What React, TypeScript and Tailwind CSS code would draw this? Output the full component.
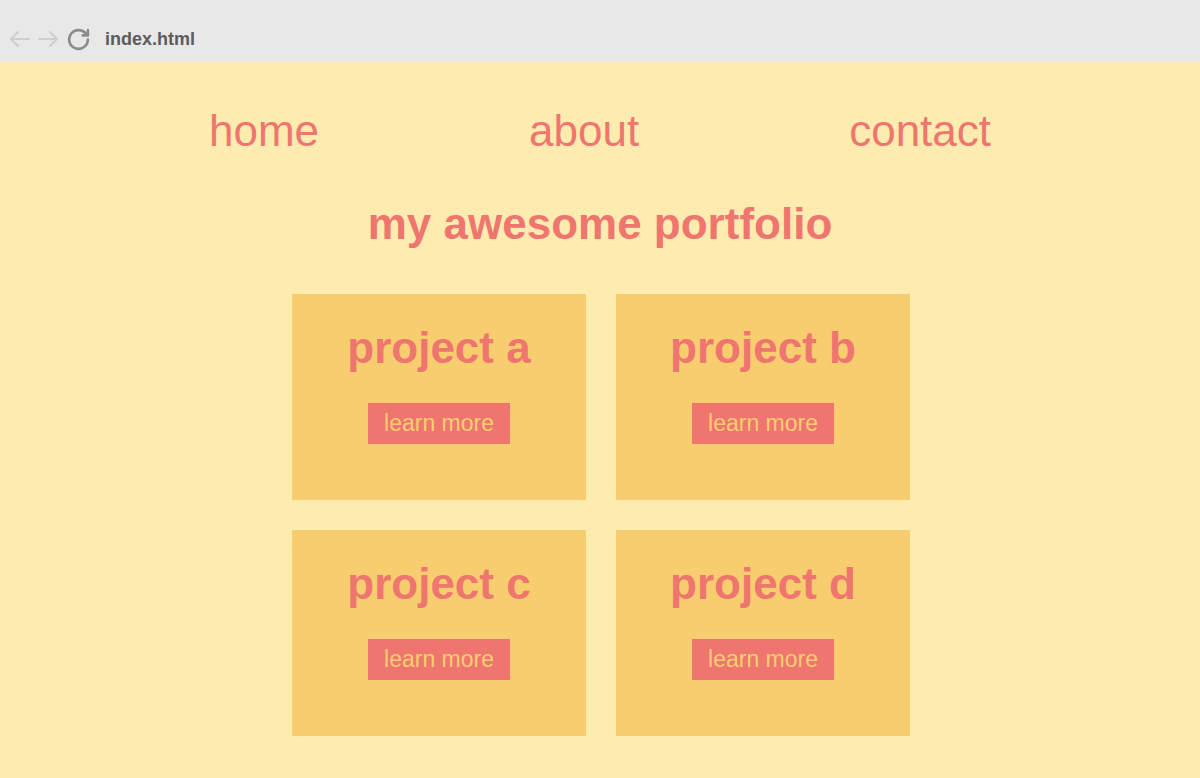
import { RotateCw } from 'lucide-react';

const projects = ['project a', 'project b', 'project c', 'project d'];

function Arrow({ flip }: { flip?: boolean }) {
  return (
    <svg
      width="21"
      height="18"
      viewBox="0 0 21 18"
      fill="none"
      stroke="#cfcfcf"
      strokeWidth="2"
      strokeLinecap="round"
      strokeLinejoin="round"
      className={flip ? 'scale-x-[-1]' : ''}
    >
      <path d="M20 9H2" />
      <path d="M9 2 2 9l7 7" />
    </svg>
  );
}

export default function App() {
  return (
    <div className="min-h-screen bg-[#feebb0] font-['Liberation_Sans',Arial,sans-serif] text-[#ee766f]">
      {/* Barra do navegador */}
      <div className="h-[62px] bg-[#e8e8e8] flex items-center pt-[16px] pl-[9px]">
        <Arrow />
        <span className="ml-[8px]">
          <Arrow flip />
        </span>
        <RotateCw className="w-[25px] h-[25px] text-[#8c8c8c] ml-[7px]" strokeWidth={2.5} />
        <span className="ml-[14px] text-[18px] font-bold text-[#5c5c5c] leading-none">index.html</span>
      </div>

      {/* Navegação */}
      <nav className="flex justify-center gap-[210px] pt-[44px] text-[44px] leading-[50px]">
        <a href="#">home</a>
        <a href="#">about</a>
        <a href="#">contact</a>
      </nav>

      <h1 className="mt-[43px] text-center text-[44px] leading-[50px] font-bold">my awesome portfolio</h1>

      {/* Projetos */}
      <div className="mt-[45px] grid grid-cols-[294px_294px] gap-[30px] justify-center pl-[2px]">
        {projects.map((p) => (
          <div key={p} className="h-[206px] bg-[#f8cd6f] flex flex-col items-center pt-[29px]">
            <h2 className="text-[44px] leading-[50px] font-bold">{p}</h2>
            <button className="mt-[30px] bg-[#ee766f] text-[#f8cd6f] text-[23px] leading-[27px] px-[16px] py-[7px]">
              learn more
            </button>
          </div>
        ))}
      </div>
    </div>
  );
}
